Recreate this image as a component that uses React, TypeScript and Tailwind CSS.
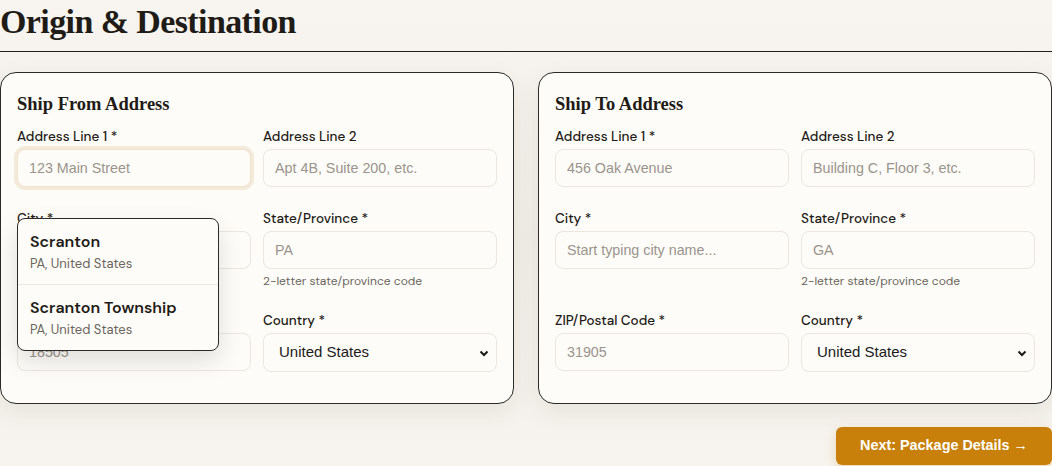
import React from "react";

const serif = { fontFamily: '"Liberation Serif", "DejaVu Serif", serif' };

function Field({
  label,
  placeholder,
  helper,
  focused,
}: {
  label: string;
  placeholder: string;
  helper?: string;
  focused?: boolean;
}) {
  return (
    <div className="flex flex-col">
      <label className="text-[13.5px] font-medium text-[#1f1b16] leading-[16px] mb-[4px]">{label}</label>
      <input
        readOnly
        placeholder={placeholder}
        className={
          "h-[38px] w-full rounded-[8px] bg-[#fdfcf8] px-[11px] text-[14.3px] placeholder:text-[#9a948c] outline-none " +
          (focused
            ? "border border-[#efe3cf] ring-[3px] ring-[#f4ead9]"
            : "border border-[#ebe7e0]")
        }
        style={{ fontFamily: '"Liberation Sans", Arial, sans-serif' }}
      />
      {helper ? (
        <div className="text-[12px] text-[#6b655d] mt-[5px] leading-[14px]">{helper}</div>
      ) : null}
    </div>
  );
}

function SelectField({ label }: { label: string }) {
  return (
    <div className="flex flex-col">
      <label className="text-[13.5px] font-medium text-[#1f1b16] leading-[16px] mb-[4px]">{label}</label>
      <div
        className="h-[39px] w-full rounded-[8px] border border-[#ebe7e0] bg-[#fdfcf8] pl-[15px] pr-[6px] flex items-center justify-between text-[15px] text-[#1a1a1a]"
        style={{ fontFamily: '"Liberation Sans", Arial, sans-serif' }}
      >
        <span>United States</span>
        <svg width="12" height="12" viewBox="0 0 12 12">
          <path d="M2.5 4.5 L6 8 L9.5 4.5" fill="none" stroke="#1a1a1a" strokeWidth="2" />
        </svg>
      </div>
    </div>
  );
}

function Card({
  title,
  a1,
  a2,
  city,
  state,
  zip,
  focused,
  dropdown,
}: {
  title: string;
  a1: string;
  a2: string;
  city: string;
  state: string;
  zip: string;
  focused?: boolean;
  dropdown?: boolean;
}) {
  return (
    <div className="relative rounded-[16px] border border-[#2b2a28] bg-[#fdfcf8] px-4 pt-[19px] pb-[15px] shadow-[0_8px_24px_rgba(60,45,20,0.08)]">
      <h2 className="text-[18.5px] font-bold text-[#1f1b16] leading-[24px] mb-[13px]" style={serif}>
        {title}
      </h2>
      <div className="grid grid-cols-2 gap-x-3">
        <div className="mb-[24px]">
          <Field label="Address Line 1 *" placeholder={a1} focused={focused} />
        </div>
        <div className="mb-[24px]">
          <Field label="Address Line 2" placeholder={a2} />
        </div>
        <div className="mb-[25px]">
          <Field label="City *" placeholder={city} />
        </div>
        <div className="mb-[25px]">
          <Field label="State/Province *" placeholder={state} helper="2-letter state/province code" />
        </div>
        <div className="mb-4">
          <Field label="ZIP/Postal Code *" placeholder={zip} />
        </div>
        <div className="mb-4">
          <SelectField label="Country *" />
        </div>
      </div>
      {dropdown ? (
        <div className="absolute left-[16px] top-[145px] w-[202px] rounded-[8px] border border-[#2b2a28] bg-[#fdfcf8] shadow-[0_10px_25px_rgba(0,0,0,0.12)] overflow-hidden">
          <div className="px-[12px] pt-[13px] pb-[12px] border-b border-[#ebe7e0]">
            <div className="text-[16px] font-semibold text-[#1f1b16] leading-[20px]">Scranton</div>
            <div className="text-[13px] text-[#6b655d] leading-[16px] mt-[4px]">PA, United States</div>
          </div>
          <div className="px-[12px] pt-[13px] pb-[12px]">
            <div className="text-[16px] font-semibold text-[#1f1b16] leading-[20px]">Scranton Township</div>
            <div className="text-[13px] text-[#6b655d] leading-[16px] mt-[4px]">PA, United States</div>
          </div>
        </div>
      ) : null}
    </div>
  );
}

export default function App() {
  return (
    <div
      className="w-[1052px] h-[466px] overflow-hidden bg-gradient-to-b from-[#f8f5f0] via-[#f1eee8] to-[#f7f4ef] text-[#1f1b16]"
      style={{ fontFamily: '"DM Sans", Lato, "Noto Sans", sans-serif' }}
    >
      <div className="border-b border-[#231f1b] pb-[8px]">
        <h1 className="text-[34px] font-bold leading-[43px] tracking-[-0.6px] text-[#1f1b16]" style={serif}>
          Origin &amp; Destination
        </h1>
      </div>
      <div className="grid grid-cols-2 gap-6 mt-[20px]">
        <Card
          title="Ship From Address"
          a1="123 Main Street"
          a2="Apt 4B, Suite 200, etc."
          city="Start typing city name..."
          state="PA"
          zip="18505"
          focused
          dropdown
        />
        <Card
          title="Ship To Address"
          a1="456 Oak Avenue"
          a2="Building C, Floor 3, etc."
          city="Start typing city name..."
          state="GA"
          zip="31905"
        />
      </div>
      <div className="flex justify-end mt-[23px]">
        <button
          className="h-[38px] px-[24px] rounded-[6px] bg-[#c8800a] text-white text-[14.4px] font-bold shadow-[0_4px_12px_rgba(200,128,10,0.25)]"
          style={{ fontFamily: '"Liberation Sans", Arial, sans-serif' }}
        >
          Next: Package Details →
        </button>
      </div>
    </div>
  );
}
